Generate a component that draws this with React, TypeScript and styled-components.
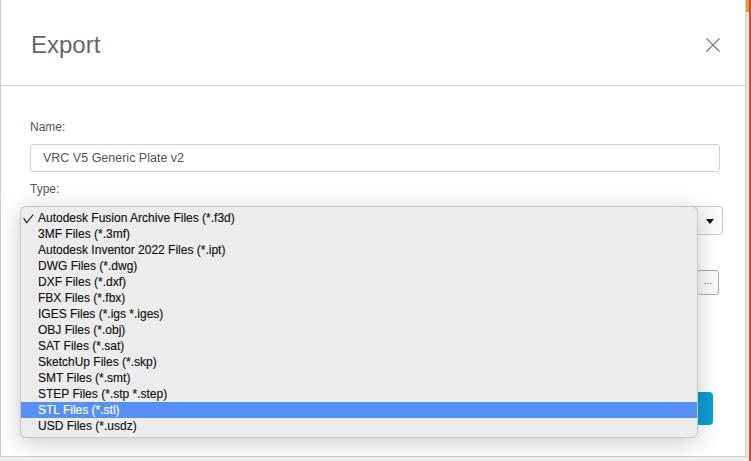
import React from 'react';
import styled, { createGlobalStyle } from 'styled-components';

const GlobalStyle = createGlobalStyle`
    body {
        margin: 0;
        background: #efefef;
        font-family: "Liberation Sans", Arial, Helvetica, sans-serif;
    }
`;

const Screen = styled.div`
    display: flex;
    width: 751px;
    height: 461px;
    overflow: hidden;
`;

const Dialog = styled.div`
    position: relative;
    display: flex;
    flex-direction: column;
    width: 746px;
    height: 457px;
    box-sizing: border-box;
    background: #fff;
    border: 1px solid #cdcdcd;
    border-top: none;
`;

const EdgeStrip = styled.div`
    flex: 1;
    background: linear-gradient(to bottom, #d9a23a 0, #d9a23a 12px, #e4e4e4 12px);
    border-right: 2px solid #c94a43;
`;

const Header = styled.div`
    display: flex;
    align-items: center;
    justify-content: space-between;
    height: 86px;
    box-sizing: border-box;
    padding: 4px 25px 0 30px;
    border-bottom: 1px solid #d6d6d6;
`;

const Title = styled.h1`
    margin: 0;
    font-size: 24px;
    font-weight: normal;
    color: #666;
`;

const CloseButton = styled.button`
    display: flex;
    padding: 0;
    border: none;
    background: none;
    cursor: pointer;
`;

const Body = styled.div`
    display: flex;
    flex-direction: column;
    padding: 34px 25px 0 29px;
`;

const Label = styled.label`
    font-size: 12px;
    line-height: 14px;
    color: #555;
    margin-bottom: 10px;
`;

// keeps the location row at the same offset as a labelled field
const FieldGap = styled.div`
    height: 23px;
`;

const TextInput = styled.input`
    height: 28px;
    box-sizing: border-box;
    padding: 0 12px;
    margin: 0 0 10px;
    border: 1px solid #cfcfcf;
    border-radius: 3px;
    font-family: inherit;
    font-size: 12.5px;
    color: #555;
    outline: none;
`;

const SelectBox = styled.div`
    display: flex;
    align-items: center;
    justify-content: flex-end;
    height: 29px;
    box-sizing: border-box;
    margin: 0 -3px 12px 0;
    padding-right: 8px;
    border: 1px solid #cbcbcb;
    border-radius: 4px;
    background: #fafafa;
`;

const Arrow = styled.span`
    width: 0;
    height: 0;
    margin-top: 1px;
    border-left: 4px solid transparent;
    border-right: 4px solid transparent;
    border-top: 5px solid #111;
`;

const PathRow = styled.div`
    display: flex;
    gap: 2px;
    margin-right: 1px;
`;

const PathInput = styled(TextInput)`
    flex: 1;
    height: 25px;
    margin: 0;
`;

const BrowseButton = styled.button`
    width: 22px;
    height: 25px;
    padding: 0 0 4px;
    border: 1px solid #ababab;
    border-radius: 3px;
    background: #fafafa;
    font-size: 10px;
    color: #777;
`;

const ButtonRow = styled.div`
    display: flex;
    justify-content: flex-end;
    margin-top: 97px;
    padding-right: 7px;
`;

const PrimaryButton = styled.button`
    width: 90px;
    height: 33px;
    border: none;
    border-radius: 4px;
    background: #0a9fd8;
`;

const Menu = styled.ul`
    position: absolute;
    left: 19px;
    top: 206px;
    width: 678px;
    box-sizing: border-box;
    margin: 0;
    padding: 3px 0;
    list-style: none;
    background: #ececec;
    border: 1px solid rgba(0, 0, 0, 0.16);
    border-radius: 6px;
    box-shadow: 0 4px 22px rgba(0, 0, 0, 0.22);
    overflow: hidden;
`;

const MenuItem = styled.li<{ $active?: boolean }>`
    position: relative;
    height: 16px;
    padding-left: 17px;
    font-size: 12px;
    line-height: 16px;
    white-space: nowrap;
    color: ${p => (p.$active ? '#fff' : '#111')};
    background: ${p => (p.$active ? '#5790f5' : 'transparent')};
    -webkit-text-stroke: 0.15px currentColor;
`;

const Check = styled.svg`
    position: absolute;
    left: 2px;
    top: 4px;
`;

const fileTypes = [
    'Autodesk Fusion Archive Files (*.f3d)',
    '3MF Files (*.3mf)',
    'Autodesk Inventor 2022 Files (*.ipt)',
    'DWG Files (*.dwg)',
    'DXF Files (*.dxf)',
    'FBX Files (*.fbx)',
    'IGES Files (*.igs *.iges)',
    'OBJ Files (*.obj)',
    'SAT Files (*.sat)',
    'SketchUp Files (*.skp)',
    'SMT Files (*.smt)',
    'STEP Files (*.stp *.step)',
    'STL Files (*.stl)',
    'USD Files (*.usdz)',
];

export default function App() {
    const checked = 0;
    const hovered = 12;

    return (
        <Screen>
            <GlobalStyle />
            <Dialog>
                <Header>
                    <Title>Export</Title>
                    <CloseButton aria-label="Close">
                        <svg width="14" height="14" viewBox="0 0 14 14">
                            <path
                                d="M0.5 0.5 L13.5 13.5 M13.5 0.5 L0.5 13.5"
                                stroke="#777"
                                strokeWidth="1.2"
                                fill="none"
                            />
                        </svg>
                    </CloseButton>
                </Header>
                <Body>
                    <Label>Name:</Label>
                    <TextInput defaultValue="VRC V5 Generic Plate v2" />
                    <Label>Type:</Label>
                    <SelectBox>
                        <Arrow />
                    </SelectBox>
                    <FieldGap />
                    <PathRow>
                        <PathInput />
                        <BrowseButton>...</BrowseButton>
                    </PathRow>
                    <ButtonRow>
                        <PrimaryButton aria-label="Export" />
                    </ButtonRow>
                </Body>
                <Menu>
                    {fileTypes.map((name, i) => (
                        <MenuItem key={name} $active={i === hovered}>
                            {i === checked && (
                                <Check width="11" height="10" viewBox="0 0 11 10">
                                    <path
                                        d="M0.6 4.2 L3.6 8.8 L10.2 0.6"
                                        stroke="#222"
                                        strokeWidth="1.2"
                                        fill="none"
                                    />
                                </Check>
                            )}
                            {name}
                        </MenuItem>
                    ))}
                </Menu>
            </Dialog>
            <EdgeStrip />
        </Screen>
    );
}
